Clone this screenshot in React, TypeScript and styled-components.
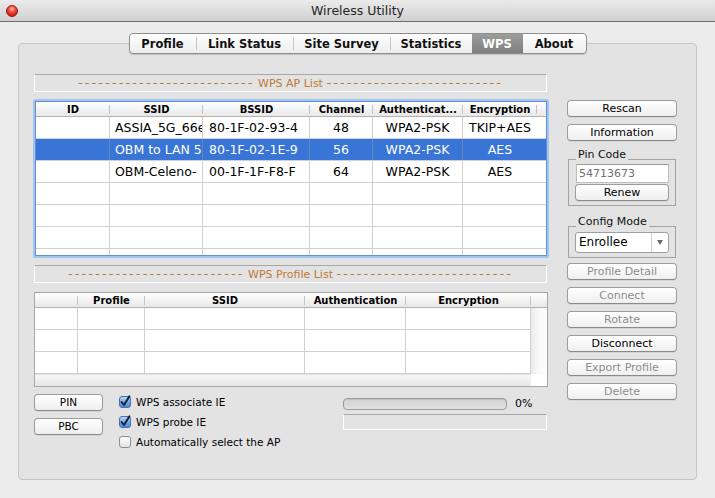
import styled, { createGlobalStyle } from "styled-components";

const GlobalStyle = createGlobalStyle`
  html, body {
    margin: 0;
    padding: 0;
  }
  body {
    background: #ececec;
    font-family: "DejaVu Sans", "Liberation Sans", sans-serif;
    color: #000;
  }
  * {
    box-sizing: border-box;
  }
`;

const Window = styled.div`
  width: 715px;
  height: 498px;
  background: #ececec;
  display: flex;
  flex-direction: column;
  overflow: hidden;
`;

const TitleBar = styled.div`
  flex: none;
  height: 22px;
  display: flex;
  align-items: center;
  padding-left: 6px;
  background: linear-gradient(#ebebeb, #d0d0d0);
  border-bottom: 1px solid #6e6e6e;
`;

const CloseDot = styled.span`
  width: 12px;
  height: 12px;
  border-radius: 50%;
  border: 1px solid #9a1a12;
  background: radial-gradient(circle at 50% 30%, #ffc0b5 0, #ef4b3d 38%, #c3150c 85%);
`;

const Title = styled.div`
  flex: 1;
  margin-right: 18px;
  text-align: center;
  font-size: 12.5px;
  color: #262626;
`;

const Body = styled.div`
  display: flex;
  flex-direction: column;
  align-items: center;
  padding-top: 11px;
`;

const TabBar = styled.div`
  position: relative;
  z-index: 1;
  display: flex;
  height: 21px;
  margin-bottom: -11px;
  border: 1px solid #8e8e8e;
  border-radius: 4px;
  overflow: hidden;
  background: linear-gradient(#ffffff, #ededed);
  box-shadow: 0 1px 1px rgba(0, 0, 0, 0.15);
`;

const Tab = styled.div<{ $w: number; $active?: boolean }>`
  width: ${(p) => p.$w}px;
  display: flex;
  align-items: center;
  justify-content: center;
  font-size: 11.5px;
  font-weight: bold;
  color: ${(p) => (p.$active ? "#fff" : "#111")};
  background: ${(p) => (p.$active ? "linear-gradient(#9d9d9d, #7e7e7e)" : "transparent")};
`;

const TabDivider = styled.span`
  width: 1px;
  height: 13px;
  align-self: center;
  background: #c6c6c6;
`;

const Panel = styled.div`
  width: 679px;
  height: 437px;
  display: flex;
  gap: 18px;
  padding: 30px 19px 0 14px;
  border: 1px solid #c6c6c6;
  border-radius: 4px;
  background: #e3e3e3;
`;

const LeftColumn = styled.div`
  width: 516px;
  display: flex;
  flex-direction: column;
`;

const SectionHeader = styled.div<{ $top?: number }>`
  height: 18px;
  margin: ${(p) => p.$top ?? 0}px 2px 0 1px;
  display: flex;
  align-items: center;
  justify-content: center;
  border-top: 1px solid #a8a8a8;
  border-left: 1px solid #fff;
  border-right: 1px solid #fff;
  border-bottom: 1px solid #fff;
  font-size: 11px;
  color: #bf7a36;
  white-space: nowrap;
`;

const Dashes = styled.span`
  font-size: 13px;
  line-height: 14px;
  letter-spacing: 2.1px;
`;

const FocusFrame = styled.div`
  margin-top: 7px;
  height: 159px;
  border: 2px solid #a3c4ee;
  border-radius: 2px;
`;

const ApGrid = styled.div`
  height: 100%;
  border: 1px solid #5f90d8;
  background: #fff;
  overflow: hidden;
`;

const HeadRow = styled.div<{ $cols: string }>`
  display: grid;
  grid-template-columns: ${(p) => p.$cols};
  height: 15px;
  border-bottom: 1px solid #b3b3b3;
  background: linear-gradient(#ffffff, #e8e8e8);
`;

const HeadCell = styled.div<{ $sep?: boolean }>`
  display: flex;
  align-items: center;
  justify-content: center;
  font-size: 10px;
  font-weight: bold;
  white-space: nowrap;
  overflow: hidden;
  background: ${(p) =>
    p.$sep ? "linear-gradient(#c4c4c4, #c4c4c4) right center / 1px 9px no-repeat" : "none"};
`;

const Row = styled.div<{ $cols: string; $selected?: boolean }>`
  display: grid;
  grid-template-columns: ${(p) => p.$cols};
  height: 22px;
  flex: none;
  border-bottom: 1px solid #d0d0d0;
  background: ${(p) => (p.$selected ? "#3875d7" : "#fff")};
  color: ${(p) => (p.$selected ? "#fff" : "#000")};
`;

const Cell = styled.div<{ $center?: boolean; $line?: boolean; $pad?: number }>`
  font-size: 12.5px;
  line-height: 21px;
  white-space: nowrap;
  overflow: hidden;
  text-align: ${(p) => (p.$center ? "center" : "left")};
  padding-left: ${(p) => p.$pad ?? 0}px;
  border-right: ${(p) => (p.$line ? "1px solid rgba(150, 150, 150, 0.45)" : "none")};
`;

const ProfileBox = styled.div`
  margin: 9px 1px 0 1px;
  height: 95px;
  display: flex;
  flex-direction: column;
  border: 1px solid #a7a7a7;
  background: #fff;
`;

const ProfileBody = styled.div`
  display: flex;
  height: 66px;
`;

const Rows = styled.div`
  width: 496px;
  display: flex;
  flex-direction: column;
`;

const VTrack = styled.div`
  flex: 1;
  background: linear-gradient(to right, #ebebeb, #f8f8f8 45%, #fdfdfd);
`;

const HScrollRow = styled.div`
  display: flex;
  height: 12px;
`;

const HTrack = styled.div`
  width: 496px;
  background: linear-gradient(#f6f6f6, #e7e7e7);
  border-top: 1px solid #e0e0e0;
`;

const Corner = styled.div`
  flex: 1;
  background: #fff;
`;

const BottomRow = styled.div`
  display: flex;
  margin-top: 7px;
  padding-left: 1px;
`;

const ButtonStack = styled.div`
  width: 69px;
  display: flex;
  flex-direction: column;
  gap: 7px;
`;

const PushButton = styled.button<{ $dim?: boolean; $top?: number; $size?: number }>`
  width: 100%;
  height: 17px;
  margin-top: ${(p) => p.$top ?? 0}px;
  padding: 0;
  border: 1px solid #9c9c9c;
  border-bottom-color: #8a8a8a;
  border-radius: 4px;
  background: linear-gradient(#ffffff, #efefef);
  box-shadow: 0 1px 0 rgba(0, 0, 0, 0.06);
  font-family: inherit;
  font-size: ${(p) => p.$size ?? 11}px;
  line-height: 15px;
  color: ${(p) => (p.$dim ? "#8d8d8d" : "#000")};
`;

const Checks = styled.div`
  width: 224px;
  margin-left: 16px;
  padding-top: 2px;
  display: flex;
  flex-direction: column;
  gap: 8px;
`;

const CheckRow = styled.label`
  display: flex;
  align-items: center;
  gap: 5px;
  height: 12px;
  font-size: 10.5px;
  white-space: nowrap;
`;

const CheckBox = styled.span<{ $checked?: boolean }>`
  flex: none;
  width: 12px;
  height: 12px;
  display: flex;
  align-items: center;
  justify-content: center;
  border-radius: 3px;
  border: 1px solid ${(p) => (p.$checked ? "#4d6e9f" : "#8f8f8f")};
  background: ${(p) =>
    p.$checked
      ? "linear-gradient(#bcd8f8, #6da5ea 55%, #4a8ae0)"
      : "linear-gradient(#ffffff, #e4e4e4)"};
  svg {
    overflow: visible;
  }
`;

const ProgressCol = styled.div`
  width: 204px;
  padding-top: 3px;
  display: flex;
  flex-direction: column;
  gap: 4px;
`;

const ProgressLine = styled.div`
  display: flex;
  align-items: center;
  gap: 8px;
  font-size: 11px;
`;

const ProgressTrack = styled.div`
  width: 164px;
  height: 12px;
  border: 1px solid #9d9d9d;
  border-radius: 4px;
  background: linear-gradient(#d3d3d3, #e1e1e1);
  box-shadow: inset 0 1px 1px rgba(0, 0, 0, 0.1);
`;

const StatusBox = styled.div`
  height: 16px;
  border-top: 1px solid #a5a5a5;
  border-left: 1px solid #fff;
  border-right: 1px solid #fff;
  border-bottom: 1px solid #fff;
`;

const RightColumn = styled.div`
  width: 110px;
  padding-top: 26px;
  display: flex;
  flex-direction: column;
`;

const GroupBox = styled.div<{ $top: number }>`
  position: relative;
  margin: ${(p) => p.$top}px 1px 0 1px;
  padding: 4px 6px 4px 6px;
  border: 1px solid #a3a3a3;
  display: flex;
  flex-direction: column;
`;

const GroupTitle = styled.span`
  position: absolute;
  left: 7px;
  top: -11px;
  padding: 0 2px;
  background: #e3e3e3;
  font-size: 11px;
  line-height: 12px;
  color: #111;
`;

const PinInput = styled.div`
  height: 19px;
  margin-left: 1px;
  padding-left: 2px;
  border: 1px solid #bdbdbd;
  border-top-color: #9a9a9a;
  background: #fff;
  font-size: 11px;
  line-height: 17px;
  color: #707070;
`;

const Select = styled.div`
  height: 21px;
  margin-top: 1px;
  display: flex;
  border: 1px solid #a0a0a0;
  border-radius: 3px;
  background: #fff;
`;

const SelectText = styled.span`
  flex: 1;
  padding-left: 3px;
  font-size: 12px;
  line-height: 19px;
`;

const SelectArrow = styled.span`
  width: 17px;
  display: flex;
  align-items: center;
  justify-content: center;
  border-left: 1px solid #d0d0d0;
  &::after {
    content: "";
    border-left: 3.5px solid transparent;
    border-right: 3.5px solid transparent;
    border-top: 5px solid #6b6b6b;
  }
`;

const ActionList = styled.div`
  margin-top: 5px;
  display: flex;
  flex-direction: column;
  gap: 7px;
`;

const apCols = "74px 93px 107px 63px 90px 74px 1fr";
const profileCols = "43px 67px 160px 101px 125px";

const apHead = ["ID", "SSID", "BSSID", "Channel", "Authenticat...", "Encryption", ""];

const apRows = [
  { ssid: "ASSIA_5G_66e", bssid: "80-1F-02-93-4", ch: "48", auth: "WPA2-PSK", enc: "TKIP+AES" },
  { ssid: "OBM to LAN 5", bssid: "80-1F-02-1E-9", ch: "56", auth: "WPA2-PSK", enc: "AES" },
  { ssid: "OBM-Celeno-", bssid: "00-1F-1F-F8-F", ch: "64", auth: "WPA2-PSK", enc: "AES" },
  null,
  null,
  null,
  null,
];

const profileHead = ["", "Profile", "SSID", "Authentication", "Encryption", ""];

const dashes = "-".repeat(26);

const tabs = [
  { label: "Profile", w: 66 },
  { label: "Link Status", w: 96 },
  { label: "Site Survey", w: 96 },
  { label: "Statistics", w: 81 },
  { label: "WPS", w: 51 },
  { label: "About", w: 63 },
];

const Check = ({ checked, label }: { checked?: boolean; label: string }) => (
  <CheckRow>
    <CheckBox $checked={checked}>
      {checked && (
        <svg width="10" height="10" viewBox="0 0 10 10">
          <path
            d="M1.6 5 L4 8 L9.4 -0.6"
            fill="none"
            stroke="#17253d"
            strokeWidth="2"
            strokeLinecap="round"
            strokeLinejoin="round"
          />
        </svg>
      )}
    </CheckBox>
    {label}
  </CheckRow>
);

const App = () => {
  const activeIndex = tabs.findIndex((t) => t.label === "WPS");

  return (
    <Window>
      <GlobalStyle />
      <TitleBar>
        <CloseDot />
        <Title>Wireless Utility</Title>
      </TitleBar>
      <Body>
        <TabBar>
          {tabs.map((t, i) => (
            <>
              {i > 0 && i !== activeIndex && i - 1 !== activeIndex && <TabDivider />}
              <Tab key={t.label} $w={t.w} $active={i === activeIndex}>
                {t.label}
              </Tab>
            </>
          ))}
        </TabBar>
        <Panel>
          <LeftColumn>
            <SectionHeader>
              <Dashes>{dashes}</Dashes>&nbsp;WPS AP List&nbsp;<Dashes>{dashes}</Dashes>
            </SectionHeader>
            <FocusFrame>
              <ApGrid>
                <HeadRow $cols={apCols}>
                  {apHead.map((h, i) => (
                    <HeadCell key={i} $sep={i < apHead.length - 1}>
                      {h}
                    </HeadCell>
                  ))}
                </HeadRow>
                {apRows.map((r, i) => (
                  <Row key={i} $cols={apCols} $selected={i === 1}>
                    <Cell $line />
                    <Cell $line $pad={5}>{r?.ssid}</Cell>
                    <Cell $line $pad={6}>{r?.bssid}</Cell>
                    <Cell $line $center>{r?.ch}</Cell>
                    <Cell $line $center>{r?.auth}</Cell>
                    <Cell $center>{r?.enc}</Cell>
                    <Cell />
                  </Row>
                ))}
              </ApGrid>
            </FocusFrame>

            <SectionHeader $top={7}>
              <Dashes>{dashes}</Dashes>&nbsp;WPS Profile List&nbsp;<Dashes>{dashes}</Dashes>
            </SectionHeader>
            <ProfileBox>
              <HeadRow $cols={profileCols + " 1fr"}>
                {profileHead.map((h, i) => (
                  <HeadCell key={i} $sep={i < profileHead.length - 1}>
                    {h}
                  </HeadCell>
                ))}
              </HeadRow>
              <ProfileBody>
                <Rows>
                  {[0, 1, 2].map((i) => (
                    <Row key={i} $cols={profileCols}>
                      <Cell $line />
                      <Cell $line />
                      <Cell $line />
                      <Cell $line />
                      <Cell $line />
                    </Row>
                  ))}
                </Rows>
                <VTrack />
              </ProfileBody>
              <HScrollRow>
                <HTrack />
                <Corner />
              </HScrollRow>
            </ProfileBox>

            <BottomRow>
              <ButtonStack>
                <PushButton $size={10.5}>PIN</PushButton>
                <PushButton $size={10.5}>PBC</PushButton>
              </ButtonStack>
              <Checks>
                <Check checked label="WPS associate IE" />
                <Check checked label="WPS probe IE" />
                <Check label="Automatically select the AP" />
              </Checks>
              <ProgressCol>
                <ProgressLine>
                  <ProgressTrack />
                  0%
                </ProgressLine>
                <StatusBox />
              </ProgressCol>
            </BottomRow>
          </LeftColumn>

          <RightColumn>
            <PushButton>Rescan</PushButton>
            <PushButton $top={7}>Information</PushButton>
            <GroupBox $top={18}>
              <GroupTitle>Pin Code</GroupTitle>
              <PinInput>54713673</PinInput>
              <PushButton $top={1}>Renew</PushButton>
            </GroupBox>
            <GroupBox $top={20}>
              <GroupTitle>Config Mode</GroupTitle>
              <Select>
                <SelectText>Enrollee</SelectText>
                <SelectArrow />
              </Select>
            </GroupBox>
            <ActionList>
              <PushButton $dim>Profile Detail</PushButton>
              <PushButton $dim>Connect</PushButton>
              <PushButton $dim>Rotate</PushButton>
              <PushButton>Disconnect</PushButton>
              <PushButton $dim>Export Profile</PushButton>
              <PushButton $dim>Delete</PushButton>
            </ActionList>
          </RightColumn>
        </Panel>
      </Body>
    </Window>
  );
};

export default App;
